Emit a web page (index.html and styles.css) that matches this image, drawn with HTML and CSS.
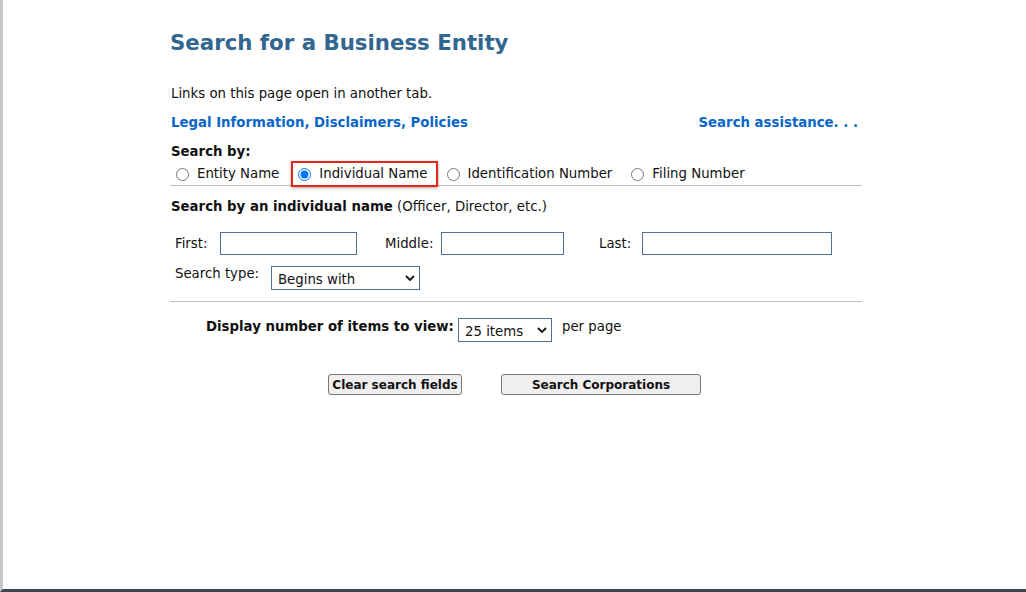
FILE: index.html
```html
<!DOCTYPE html>
<html lang="en">
<head>
    <meta charset="UTF-8">
    <meta name="viewport" content="width=device-width, initial-scale=1.0">
    <title>Search for a Business Entity</title>
    <link rel="stylesheet" href="styles.css">
</head>
<body>
    <div class="page">
        <div class="content">
            <h1 class="page-title">Search for a Business Entity</h1>

            <p class="note">Links on this page open in another tab.</p>

            <div class="link-row">
                <a href="#" class="link">Legal Information, Disclaimers, Policies</a>
                <a href="#" class="link">Search assistance. . .</a>
            </div>

            <div class="search-by-label">Search by:</div>
            <div class="radio-row">
                <label class="radio-opt"><input type="radio" name="searchBy"> Entity Name</label>
                <label class="radio-opt highlight"><input type="radio" name="searchBy" checked> Individual Name</label>
                <label class="radio-opt"><input type="radio" name="searchBy"> Identification Number</label>
                <label class="radio-opt"><input type="radio" name="searchBy"> Filing Number</label>
            </div>
            <hr class="divider">

            <div class="section-title"><b>Search by an individual name</b> (Officer, Director, etc.)</div>

            <div class="name-row">
                <label class="name-label first-label" for="first">First:</label>
                <input type="text" id="first" class="text-input first-input">
                <label class="name-label middle-label" for="middle">Middle:</label>
                <input type="text" id="middle" class="text-input middle-input">
                <label class="name-label last-label" for="last">Last:</label>
                <input type="text" id="last" class="text-input last-input">
            </div>

            <div class="type-row">
                <label class="type-label" for="searchType">Search type:</label>
                <div class="select-wrap type-select">
                    <select id="searchType">
                        <option>Begins with</option>
                        <option>Contains</option>
                        <option>Exact match</option>
                    </select>
                    <svg class="chevron" width="10" height="6" viewBox="0 0 10 6"><path d="M1 1l4 4 4-4" fill="none" stroke="#111" stroke-width="1.8"/></svg>
                </div>
            </div>
            <hr class="divider second">

            <div class="display-row">
                <span class="display-label">Display number of items to view:</span>
                <div class="select-wrap items-select">
                    <select>
                        <option>25 items</option>
                        <option>50 items</option>
                        <option>100 items</option>
                    </select>
                    <svg class="chevron" width="10" height="6" viewBox="0 0 10 6"><path d="M1 1l4 4 4-4" fill="none" stroke="#111" stroke-width="1.8"/></svg>
                </div>
                <span class="per-page">per page</span>
            </div>

            <div class="button-row">
                <button class="btn clear-btn">Clear search fields</button>
                <button class="btn search-btn">Search Corporations</button>
            </div>
        </div>
    </div>
</body>
</html>
```

FILE: styles.css
```css
html, body {
    height: 100%;
}

body {
    margin: 0;
    font-family: "DejaVu Sans", Verdana, sans-serif;
    font-size: 13.3px;
    color: #111;
    background-color: #fff;
}

.page {
    box-sizing: border-box;
    height: 592px;
    border-left: 3px solid #c6c6c6;
    border-bottom: 3px solid #3b4652;
}

.content {
    width: 692px;
    margin-left: 167px;
    padding-top: 30px;
}

.page-title {
    margin: 0;
    font-size: 21.3px;
    line-height: 26px;
    font-weight: bold;
    color: #30668f;
}

.note {
    margin: 30px 0 0 1px;
    line-height: 16px;
}

.link-row {
    display: flex;
    justify-content: space-between;
    margin-top: 13px;
    padding: 0 4px 0 1px;
    line-height: 16px;
}

.link {
    color: #0a66c8;
    font-weight: bold;
    text-decoration: none;
}

.search-by-label {
    margin: 13px 0 0 1px;
    font-weight: bold;
    line-height: 16px;
}

.radio-row {
    display: flex;
    align-items: center;
    gap: 19px;
    height: 20px;
    margin-top: 4px;
    padding-left: 6px;
}

.radio-opt {
    display: flex;
    align-items: center;
    gap: 8px;
    line-height: 16px;
}

.radio-opt input {
    width: 13px;
    height: 13px;
    margin: 0;
}

.radio-opt.highlight {
    border: 2px solid #e3261c;
    padding: 3px 8px 3px 5px;
    margin: -5px -10px -5px -7px;
    box-shadow: 0 1px 3px rgba(0, 0, 0, 0.35);
}

.divider {
    margin: 1px 0 0 0;
    border: 0;
    border-top: 1px solid #bdbdbd;
    height: 0;
}

.section-title {
    margin: 13px 0 0 1px;
    line-height: 16px;
}

.name-row {
    display: flex;
    align-items: center;
    margin-top: 17px;
    padding-left: 5px;
}

.name-label {
    line-height: 16px;
}

.first-label {
    width: 45px;
}

.middle-label {
    width: 56px;
    margin-left: 28px;
}

.last-label {
    width: 43px;
    margin-left: 35px;
}

.text-input {
    box-sizing: border-box;
    height: 23px;
    border: 1px solid #4f6f98;
    border-radius: 0;
    padding: 0 4px;
    font-family: inherit;
    font-size: 13px;
    outline: none;
}

.first-input {
    width: 137px;
}

.middle-input {
    width: 123px;
}

.last-input {
    width: 190px;
}

.type-row {
    display: flex;
    align-items: flex-start;
    margin-top: 11px;
    padding-left: 5px;
}

.type-label {
    width: 96px;
    line-height: 16px;
}

.select-wrap {
    position: relative;
    height: 24px;
}

.select-wrap select {
    box-sizing: border-box;
    width: 100%;
    height: 24px;
    border: 1px solid #4f6f98;
    border-radius: 0;
    background-color: #fff;
    padding: 2px 20px 0 6px;
    font-family: inherit;
    font-size: 13.3px;
    color: #111;
    appearance: none;
    -webkit-appearance: none;
    outline: none;
}

.chevron {
    position: absolute;
    right: 5px;
    top: 9px;
    pointer-events: none;
}

.type-select {
    width: 149px;
}

.divider.second {
    margin-top: 11px;
}

.display-row {
    display: flex;
    align-items: flex-start;
    margin-top: 16px;
    padding-left: 36px;
}

.display-label {
    width: 252px;
    font-weight: bold;
    line-height: 16px;
    padding-top: 1px;
    white-space: nowrap;
}

.items-select {
    width: 94px;
}

.per-page {
    margin-left: 10px;
    line-height: 16px;
    padding-top: 1px;
}

.button-row {
    display: flex;
    gap: 39px;
    margin-top: 32px;
    padding-left: 158px;
}

.btn {
    box-sizing: border-box;
    height: 21px;
    padding: 0;
    border: 1px solid #767676;
    border-radius: 3px;
    background-color: #efefef;
    font-family: inherit;
    font-size: 12px;
    font-weight: bold;
    color: #111;
    white-space: nowrap;
    cursor: pointer;
}

.clear-btn {
    width: 134px;
}

.search-btn {
    width: 200px;
}
```
